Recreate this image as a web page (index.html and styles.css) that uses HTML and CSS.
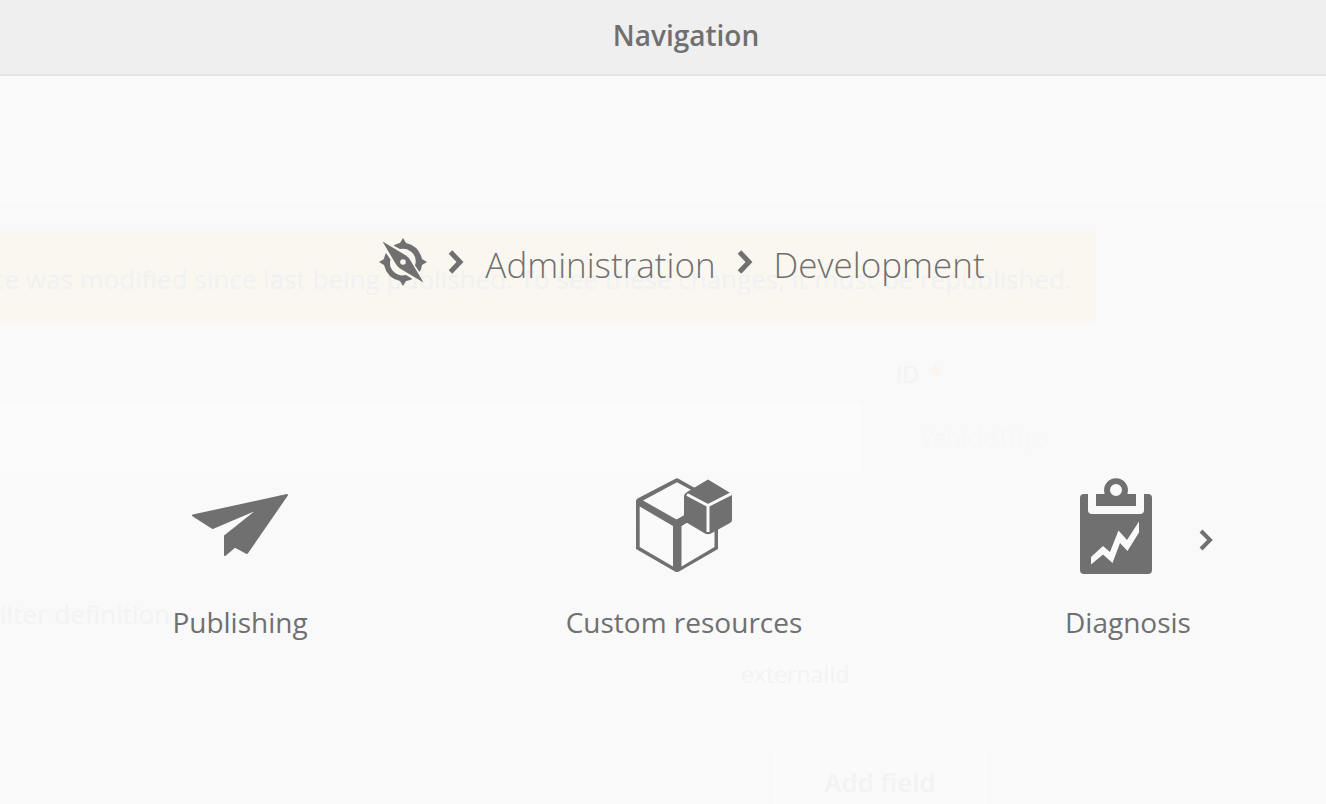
FILE: index.html
```
<!DOCTYPE html>
<html lang="en">
<head>
<meta charset="utf-8">
<title>Navigation</title>
<link rel="stylesheet" href="styles.css">
</head>
<body>
<div class="page">
  <div class="resource">
    <div class="resource-band"></div>
    <p class="notice"><span>ce was modified since last being published. To see these changes, it must be republished.</span></p>
    <div class="fields">
      <input class="field-box" type="text" aria-label="Label">
      <div class="field">
        <label for="resource-id">ID <span class="required">*</span></label>
        <input id="resource-id" class="field-value" type="text" value="VehicleTrips" readonly>
      </div>
    </div>
    <h2 class="filter-title">ilter definition</h2>
    <div class="filter-row">externalId</div>
    <button class="add-field" type="button">Add field</button>
  </div>

  <div class="overlay">
    <header class="overlay-header"><h1>Navigation</h1></header>
    <nav class="crumbs" aria-label="Breadcrumb">
      <a class="crumb-home" href="#" aria-label="Home">
        <svg width="48" height="48" viewBox="0 0 48 48" fill="currentColor">
          <path d="M14.500 7.500Q17.500 5.500 21 5L24 0L27 5Q40 8 43 21L48 24L43 27Q42.500 31 40.500 34L36 27.500Q38.500 19 32.500 14Q27.500 9.500 21 11Z"/>
          <path d="M5 21Q5.500 17.500 7 15L11.500 21.500Q9.500 29 15 34Q20 38.500 27 37L33.500 41Q30.500 42.500 27 43L24 48L21 43Q8 40 5 27L0 24Z"/>
          <path fill-rule="evenodd" d="M3.500 3.500L27 17.500Q30 19.500 31.500 22.500L44.500 44.500L21 30.500Q18 28.500 16.500 25.500ZM24 21.200a2.800 2.800 0 1 0 0 5.600a2.800 2.800 0 1 0 0-5.600Z"/>
        </svg>
      </a>
      <svg class="crumb-arrow" width="16" height="26" viewBox="0 0 16 26"><path d="M2.500 3L12 13L2.500 23"/></svg>
      <a class="crumb" href="#">Administration</a>
      <svg class="crumb-arrow" width="16" height="26" viewBox="0 0 16 26"><path d="M2.500 3L12 13L2.500 23"/></svg>
      <a class="crumb" href="#">Development</a>
    </nav>
    <div class="tiles">
      <a class="tile" href="#">
        <svg width="96" height="96" viewBox="0 0 96 96" fill="currentColor" stroke="currentColor" stroke-width="2" stroke-linejoin="round">
          <path d="M1 37.500L95 17L55 75L43 68.500L33 77V58L62.500 34.500Q63 32.500 60.500 33L20.500 50Z"/>
        </svg>
        <span>Publishing</span>
      </a>
      <a class="tile" href="#">
        <svg width="96" height="96" viewBox="0 0 96 96">
          <path fill="currentColor" d="M42 .500L82 23V71L43 93.500Q41 94.500 39 93.500L0 71V23Q0 21.500 1.500 20.500L40 .500Q41 0 42 .500Z"/>
          <path fill="#fafafa" d="M41 4.200L69 19.500V33L40.500 41.500L7 22.500Z"/>
          <path fill="#fafafa" d="M3.700 28.500L37 48V88.500L3.700 69Z"/>
          <path fill="#fafafa" d="M45.500 48L52 44L78.500 44V69L45.500 88.500Z"/>
          <path fill="currentColor" d="M40 42L50 36V45L45 48Z"/>
          <path fill="currentColor" d="M51 14L72 1.500L96 16V42Q96 44 94 45L75 55.500Q72 57 69 55.500L48 43V18Q48 16 51 14Z"/>
          <path d="M51 16.500L72 27.500L95.500 15.500M72 27V54" fill="none" stroke="#fafafa" stroke-width="3"/>
        </svg>
        <span>Custom resources</span>
      </a>
      <a class="tile" href="#">
        <span class="tile-icon">
          <svg width="96" height="96" viewBox="0 0 96 96" fill="currentColor">
            <path d="M4 16H8V32Q8 36 12 36H60Q64 36 64 32V16H68Q72 16 72 20V92Q72 96 68 96H4Q0 96 0 92V20Q0 16 4 16Z"/>
            <path fill-rule="evenodd" d="M16 16H24.600A12 12 0 1 1 47.400 16H56V28H16ZM36 6a6 6 0 1 0 0 12a6 6 0 1 0 0-12Z"/>
            <path fill="#fafafa" d="M11 79L23 68L30 74L38.500 52.500L47 62L59 43.500V54.500L47.500 73L40 65L32.500 85L23 76.500L11 86.500Z"/>
          </svg>
          <svg class="tile-arrow" width="14" height="22" viewBox="0 0 14 22"><path d="M2 2L11 11L2 20"/></svg>
        </span>
        <span>Diagnosis</span>
      </a>
    </div>
  </div>
</div>
</body>
</html>
```
FILE: styles.css
```
* { box-sizing: border-box; }
body {
  margin: 0;
  background: #f9f9f9;
  color: #707070;
  font-family: "Open Sans", sans-serif;
}
a { color: inherit; text-decoration: none; }
h1, h2, p { margin: 0; }
.page {
  position: relative;
  height: 100vh;
  overflow: hidden;
}
.resource {
  display: flex;
  flex-direction: column;
  padding-top: 96px;
  color: #f3f3f3;
  font-size: 23px;
}
.resource-band { height: 108px; background: #fafafa; }
.notice {
  display: flex;
  margin: 27px 230px 0 0;
  padding: 30px 0 26px;
  border-radius: 0 4px 4px 0;
  background: #faf7f0;
  color: #f1f1f3;
  font-size: 26px;
  line-height: 36px;
  white-space: nowrap;
}
.notice span { margin-left: -8px; }
.fields {
  display: grid;
  grid-template-columns: 65% 1fr;
  column-gap: 34px;
  align-items: end;
  padding-top: 35px;
}
.field-box {
  height: 70px;
  border: 0;
  border-radius: 0 4px 4px 0;
  background: #fbfbfb;
}
.field { display: flex; flex-direction: column; }
.field label { line-height: 32px; }
.required { margin-left: 4px; color: #fbf3ee; }
.field-value {
  width: 200px;
  height: 70px;
  margin-top: 12px;
  padding: 0 24px;
  border: 0;
  background: transparent;
  color: #f7f7f7;
  font: 23px "Open Sans", sans-serif;
}
.filter-title {
  padding-top: 122px;
  font-size: 26px;
  font-weight: 400;
  line-height: 40px;
}
.filter-row {
  height: 65px;
  margin-top: 21px;
  padding-left: 741px;
  background: #fafafa;
  line-height: 38px;
}
.add-field {
  width: 216px;
  height: 76px;
  margin: 24px 0 0 772px;
  border: 1px solid #f8f8f8;
  border-radius: 4px;
  background: #fafafa;
  color: #f3f3f3;
  font: 600 26px "Open Sans", sans-serif;
}
.overlay {
  position: absolute;
  top: 0;
  left: 0;
  width: calc(100% + 46px);
}
.overlay-header {
  height: 76px;
  border-bottom: 2px solid #e5e5e5;
  background: #efefef;
  text-align: center;
}
.overlay-header h1 {
  font-size: 28px;
  font-weight: 600;
  line-height: 70px;
}
.crumbs {
  display: flex;
  align-items: flex-start;
  justify-content: center;
  gap: 21px;
  padding: 162px 8px 0 0;
  font-size: 35px;
  font-weight: 300;
  line-height: 48px;
}
.crumb-home { display: flex; }
.crumb { padding-top: 3px; }
.crumb-arrow, .tile-arrow {
  fill: none;
  stroke: currentColor;
  stroke-width: 5;
}
.crumb-arrow { margin-top: 11px; }
.tiles {
  display: grid;
  grid-template-columns: repeat(3, 1fr);
  padding: 189px 22px 0 18px;
}
.tile {
  display: flex;
  flex-direction: column;
  align-items: center;
  gap: 28px;
  font-size: 28px;
  line-height: 40px;
}
.tile-icon { display: flex; position: relative; }
.tile-arrow {
  position: absolute;
  top: 51px;
  left: 119px;
  stroke-width: 4;
}
```
